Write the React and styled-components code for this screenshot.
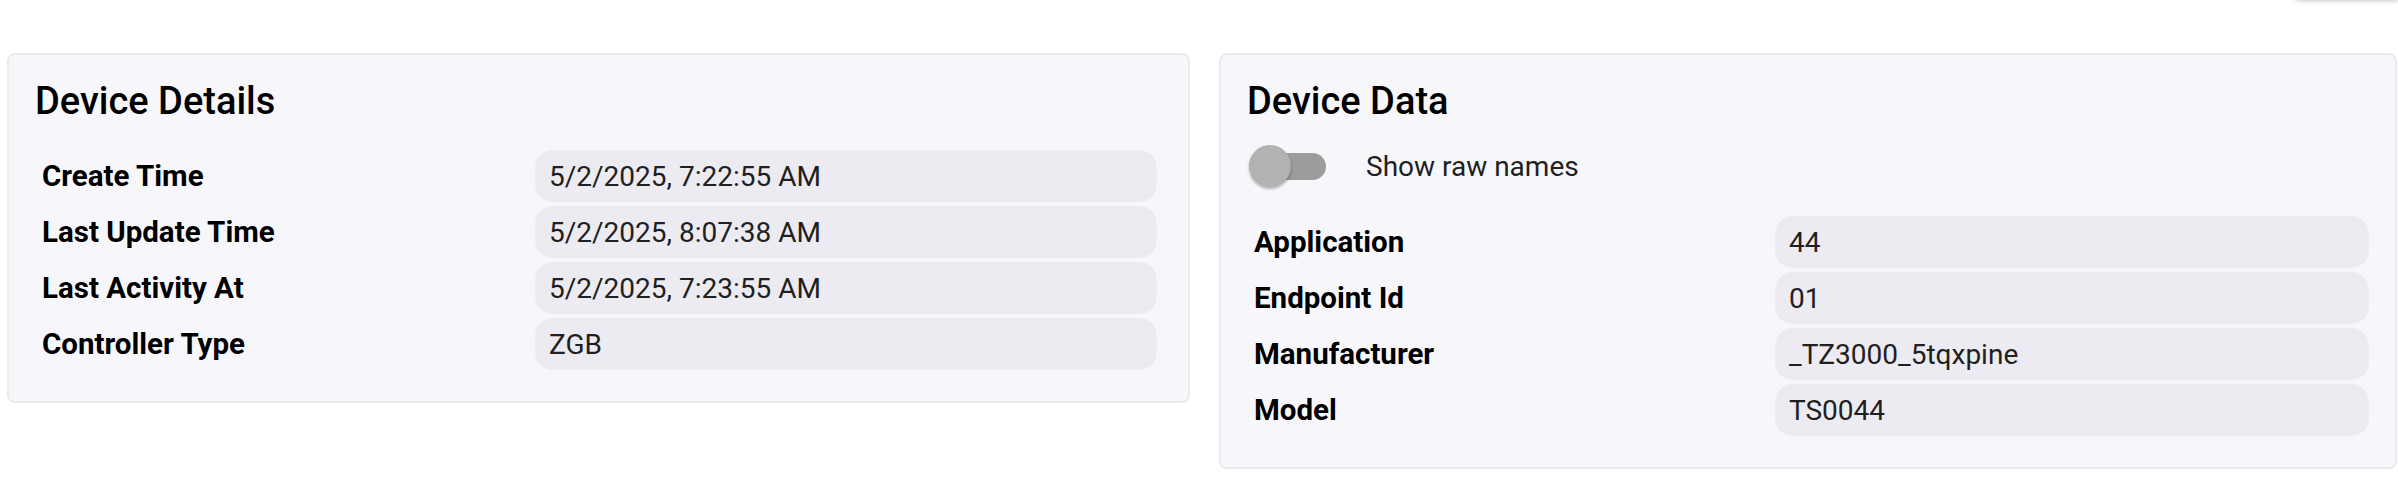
import React, { useState } from 'react';
import styled, { createGlobalStyle } from 'styled-components';

const details = [
    { label: 'Create Time', value: '5/2/2025, 7:22:55 AM' },
    { label: 'Last Update Time', value: '5/2/2025, 8:07:38 AM' },
    { label: 'Last Activity At', value: '5/2/2025, 7:23:55 AM' },
    { label: 'Controller Type', value: 'ZGB' },
];

const deviceData = [
    { label: 'Application', raw: 'application', value: '44' },
    { label: 'Endpoint Id', raw: 'endpointId', value: '01' },
    { label: 'Manufacturer', raw: 'manufacturer', value: '_TZ3000_5tqxpine' },
    { label: 'Model', raw: 'model', value: 'TS0044' },
];

const App = () => {
    const [showRaw, setShowRaw] = useState(false);

    return (<>
        <GlobalStyle />
        <Page>
            <TopBar>
                <TopTab />
            </TopBar>

            <Cards>
                <Card>
                    <Title>Device Details</Title>
                    <Table $labelCol={500} $valueCol={622}>
                        {details.map((row) => (
                            <React.Fragment key={row.label}>
                                <Label>{row.label}</Label>
                                <Value>{row.value}</Value>
                            </React.Fragment>
                        ))}
                    </Table>
                </Card>

                <Card>
                    <Title>Device Data</Title>
                    <SwitchRow>
                        <Switch
                            role="switch"
                            aria-checked={showRaw}
                            onClick={() => setShowRaw(!showRaw)}
                        >
                            <Track $on={showRaw} />
                            <Thumb $on={showRaw} />
                        </Switch>
                        <SwitchText>Show raw names</SwitchText>
                    </SwitchRow>
                    <Table $labelCol={528} $valueCol={594}>
                        {deviceData.map((row) => (
                            <React.Fragment key={row.label}>
                                <Label>{showRaw ? row.raw : row.label}</Label>
                                <Value>{row.value}</Value>
                            </React.Fragment>
                        ))}
                    </Table>
                </Card>
            </Cards>
        </Page>
    </>);
};

export default App;

const GlobalStyle = createGlobalStyle`
    body {
        margin: 0;
        background: #ffffff;
        font-family: Roboto, "Noto Sans", sans-serif;
        color: #000;
    }
`

const Page = styled.div`
    width: 2398px;
`

const TopBar = styled.div`
    height: 53px;
    display: flex;
    justify-content: flex-end;
    align-items: flex-start;
`

const TopTab = styled.div`
    width: 104px;
    height: 40px;
    margin-top: -40px;
    background: #ffffff;
    border-radius: 0 0 0 6px;
    box-shadow: 0 1px 4px rgba(0, 0, 0, 0.22);
`

const Cards = styled.div`
    display: grid;
    grid-template-columns: 1183px 1178px;
    column-gap: 29px;
    align-items: start;
    padding-left: 7px;
`

const Card = styled.section`
    background: #f7f7fb;
    border: 2px solid #eaeaef;
    border-radius: 8px;
    padding: 27px 26px 31px 26px;
`

const Title = styled.h2`
    margin: 0;
    font-size: 38px;
    line-height: 38px;
    font-weight: 500;
    color: #000;
`

const Table = styled.div`
    display: grid;
    grid-template-columns: ${(p) => p.$labelCol}px ${(p) => p.$valueCol}px;
    grid-auto-rows: 52px;
    row-gap: 4px;
    margin-top: 30px;
`

const Label = styled.div`
    display: flex;
    align-items: center;
    padding-left: 7px;
    font-size: 29.5px;
    font-weight: 700;
    color: #000;
`

const Value = styled.div`
    display: flex;
    align-items: center;
    padding-left: 14px;
    background: #ecebf1;
    border-radius: 18px;
    font-size: 28px;
    color: #1f1f1f;
`

const SwitchRow = styled.div`
    display: flex;
    align-items: center;
    gap: 40px;
    height: 42px;
    margin-top: 25px;
    padding-left: 2px;

    & + ${Table} {
        margin-top: 29px;
    }
`

const Switch = styled.span`
    position: relative;
    display: inline-flex;
    align-items: center;
    width: 77px;
    height: 42px;
    cursor: pointer;
`

const Track = styled.span`
    margin-left: 9px;
    width: 68px;
    height: 27px;
    border-radius: 14px;
    background: ${(p) => (p.$on ? '#90caf9' : '#9c9c9c')};
`

const Thumb = styled.span`
    position: absolute;
    top: 0;
    left: ${(p) => (p.$on ? '35px' : '0')};
    width: 42px;
    height: 42px;
    border-radius: 50%;
    background: ${(p) => (p.$on ? '#1976d2' : '#b2b2b2')};
    box-shadow: 0 2px 3px rgba(0, 0, 0, 0.28);
`

const SwitchText = styled.span`
    font-size: 28px;
    color: #1f1f1f;
`
